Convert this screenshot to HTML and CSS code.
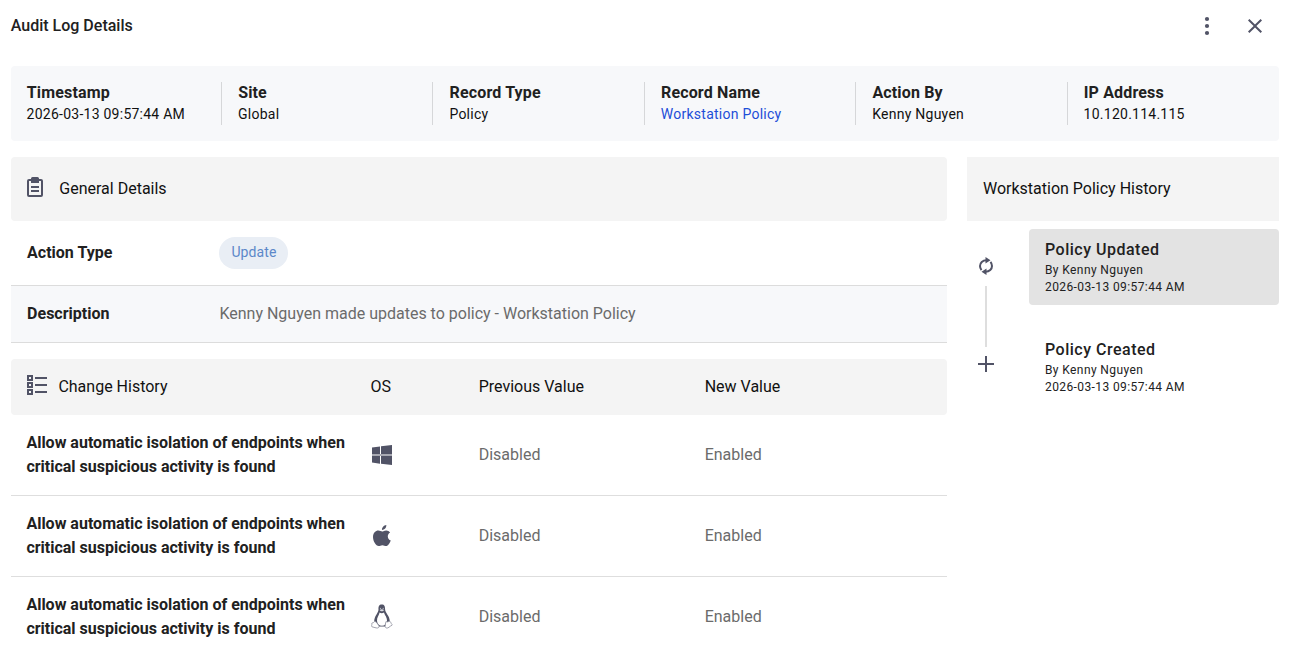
FILE: index.html
```html
<!DOCTYPE html>
<html lang="en">
<head>
  <meta charset="UTF-8">
  <meta name="viewport" content="width=device-width, initial-scale=1.0">
  <title>Audit Log Details</title>
  <link rel="stylesheet" href="styles.css">
</head>
<body>
  <header class="page-header">
    <h1>Audit Log Details</h1>
    <div class="header-actions">
      <button class="icon-button" aria-label="More">
        <svg width="24" height="24" viewBox="0 0 24 24"><circle cx="12" cy="5" r="2.1"/><circle cx="12" cy="12" r="2.1"/><circle cx="12" cy="19" r="2.1"/></svg>
      </button>
      <button class="icon-button" aria-label="Close">
        <svg width="24" height="24" viewBox="0 0 24 24"><path d="M19 6.400L17.600 5 12 10.600 6.400 5 5 6.400l5.600 5.600L5 17.600 6.400 19l5.600-5.600 5.600 5.600 1.400-1.400-5.600-5.600z"/></svg>
      </button>
    </div>
  </header>

  <section class="summary">
    <div class="summary-item"><strong>Timestamp</strong><span>2026-03-13 09:57:44 AM</span></div>
    <div class="summary-item"><strong>Site</strong><span>Global</span></div>
    <div class="summary-item"><strong>Record Type</strong><span>Policy</span></div>
    <div class="summary-item"><strong>Record Name</strong><a href="#">Workstation Policy</a></div>
    <div class="summary-item"><strong>Action By</strong><span>Kenny Nguyen</span></div>
    <div class="summary-item"><strong>IP Address</strong><span>10.120.114.115</span></div>
  </section>

  <div class="content">
    <main>
      <div class="panel-header general-header">
        <svg width="16" height="20" viewBox="0 0 16 20"><path fill-rule="evenodd" d="M2 2h2V1.500Q4 0 5.500 0h5Q12 0 12 1.500V2h2q2 0 2 2v14q0 2-2 2H2q-2 0-2-2V4q0-2 2-2zM2 4v14h12V4h-2v2H4V4zM4 9h8v2H4zM4 13h8v2H4z"/></svg>
        <h2>General Details</h2>
      </div>
      <div class="detail-row">
        <strong>Action Type</strong>
        <span class="badge">Update</span>
      </div>
      <div class="detail-row shaded">
        <strong>Description</strong>
        <span class="muted">Kenny Nguyen made updates to policy - Workstation Policy</span>
      </div>

      <div class="panel-header change-grid change-header">
        <div class="change-title">
          <svg width="20" height="20" viewBox="0 0 20 20"><path fill-rule="evenodd" d="M0 0h6v6H0zM2 2v2h2V2zM0 7h6v6H0zM2 9v2h2V9zM0 14h6v6H0zM2 16v2h2v-2zM8 2h12v2H8zM8 9h12v2H8zM8 16h12v2H8z"/></svg>
          <h2>Change History</h2>
        </div>
        <span>OS</span>
        <span>Previous Value</span>
        <span>New Value</span>
      </div>
      <div class="change-grid change-row">
        <strong>Allow automatic isolation of endpoints when critical suspicious activity is found</strong>
        <!-- Windows -->
        <svg width="22" height="22" viewBox="0 0 22 22"><path d="M1 3.500L9 2.400V10H1zM10 2.200L21 1v9H10zM1 12h8v7.700L1 18.600zM10 12h11v9l-11-1.200z"/><path opacity=".5" d="M1 10h20v2H1z"/></svg>
        <span class="muted">Disabled</span>
        <span class="muted">Enabled</span>
      </div>
      <div class="change-grid change-row">
        <strong>Allow automatic isolation of endpoints when critical suspicious activity is found</strong>
        <!-- macOS -->
        <svg width="22" height="22" viewBox="0 0 22 22"><path d="M15.300 0c.3 2.600-1.800 4.900-4.300 5C10.700 2.600 12.900.4 15.300 0zM11.200 6.500c1 0 2.200-1.100 4-1.100 1.600 0 3 .8 3.900 2-3.400 2-2.900 6.700.7 8.100-.8 2.200-2.700 5.600-4.700 5.600-1.400 0-2-.8-3.700-.8s-2.400.8-3.700.8C4.900 21.100 2 16.200 2 12.100 2 7.800 4.700 5.500 7.300 5.500c1.700 0 2.900 1 3.900 1z"/></svg>
        <span class="muted">Disabled</span>
        <span class="muted">Enabled</span>
      </div>
      <div class="change-grid change-row">
        <strong>Allow automatic isolation of endpoints when critical suspicious activity is found</strong>
        <!-- Linux -->
        <svg width="22" height="26" viewBox="0 0 22 26">
          <path d="M10.800.5C8 .5 7.300 2.500 7.500 5.500c.1 3.400-4.300 6.300-4.300 12l4 5h8l3.600-5c0-6-4.600-8.300-4.700-12C14.100 2.500 13.500.5 10.800.5z"/>
          <path fill="#fff" d="M8.600 8.500c1.200 1 3.200 1 4.400 0 .7 2.700 3.200 4.800 3 8.500-.2 3.200-2.300 4.800-5.100 4.800S6.400 20 6 17c-.3-3.500 2.100-5.800 2.600-8.500z"/>
          <path fill="#d9dae0" d="M8.600 6c1-1.100 3.500-1.100 4.400 0-.7 1.600-3.500 1.700-4.400 0z"/>
          <circle cx="9.500" cy="4.400" r=".6" fill="#b5b6c0"/><circle cx="12.200" cy="4.400" r=".6" fill="#b5b6c0"/>
          <path fill="#fff" stroke="#8b8d9a" stroke-width=".8" d="M3.800 17.300c1.500.5 2.800 2.500 4 4.300.9 1.700-.6 2.800-2.600 2.300-1.400-.4-3-.7-4.200-1.100-1.100-.5.200-1.900-.2-3.200-.1-1.200 1.300-.5 1.800-1.100.4-.5.600-1 1.200-1.200zM17.900 17.300c-.9 1-2.400.5-2.900.2-.5 1.600-.9 3.500-.9 5 .4 1.900 2.600 2 3.900.7.900-.9 2-1.300 2.900-1.900.8-.8-.7-1.400-1-2.500-.2-.9-.8-1.700-2-1.500z"/>
        </svg>
        <span class="muted">Disabled</span>
        <span class="muted">Enabled</span>
      </div>
    </main>

    <aside>
      <div class="history-header"><h2>Workstation Policy History</h2></div>
      <div class="timeline">
        <div class="timeline-track">
          <svg width="16" height="20" viewBox="0 0 16 20"><path fill="none" stroke="#515366" stroke-width="2" d="M8.500 4.200C4.500 4.200 2 7 2 10c0 1.600.6 3 1.500 4.100M7.500 15.800C11.500 15.800 14 13 14 10c0-1.600-.6-3-1.500-4.100"/><path d="M7.500 1L12.500 4.200 7.500 7.500zM8.500 12.500L3.500 15.800 8.500 19z"/></svg>
          <span class="timeline-line"></span>
          <svg width="16" height="16" viewBox="0 0 16 16"><path d="M7 0h2v7h7v2H9v7H7V9H0V7h7z"/></svg>
        </div>
        <div class="timeline-events">
          <div class="event active">
            <h3>Policy Updated</h3>
            <p>By Kenny Nguyen</p>
            <p>2026-03-13 09:57:44 AM</p>
          </div>
          <div class="event">
            <h3>Policy Created</h3>
            <p>By Kenny Nguyen</p>
            <p>2026-03-13 09:57:44 AM</p>
          </div>
        </div>
      </div>
    </aside>
  </div>
</body>
</html>
```

FILE: styles.css
```css
* {
  box-sizing: border-box;
}
body {
  margin: 0;
  padding: 0 15px 0 10.6px;
  font-family: Roboto, "Liberation Sans", sans-serif;
  font-size: 16px;
  line-height: 24px;
  color: #111;
  background: #fff;
  overflow: hidden;
}
h1, h2, h3, p {
  margin: 0;
}
h1, h2 {
  font-size: 16px;
  font-weight: 400;
}
svg {
  display: block;
  fill: #515366;
}
strong {
  font-weight: 700;
  color: #212121;
}
.page-header {
  display: flex;
  justify-content: space-between;
  align-items: center;
  height: 66px;
  padding: 0 12px 14px 0.2px;
}
.page-header h1 {
  font-weight: 500;
  color: #212121;
}
.header-actions {
  display: flex;
  gap: 24px;
}
.icon-button {
  padding: 0;
  border: none;
  background: none;
  cursor: pointer;
}

/* Summary bar */
.summary {
  display: grid;
  grid-template-columns: repeat(6, 1fr);
  height: 75px;
  padding: 16px 0;
  background: #f7f8fa;
  border-radius: 4px;
}
.summary-item {
  display: flex;
  flex-direction: column;
  padding-left: 16px;
  border-right: 1px solid #d6d7d9;
  font-size: 14px;
  line-height: 21px;
  letter-spacing: 0.25px;
}
.summary-item:last-child {
  border-right: none;
}
.summary-item strong {
  padding-left: 0.2px;
  font-size: 16px;
  line-height: 22px;
  letter-spacing: 0.15px;
}
.summary-item a {
  color: #1d4ed8;
  text-decoration: none;
}

.content {
  display: grid;
  grid-template-columns: 936px 312px;
  gap: 20.4px;
  margin-top: 16px;
}
.panel-header {
  background: #f4f4f4;
  border-radius: 4px;
}
.general-header {
  display: flex;
  align-items: center;
  gap: 16.7px;
  height: 64px;
  padding: 0 16px;
}
.panel-header svg {
  margin-bottom: 4px;
}
.detail-row {
  display: grid;
  grid-template-columns: 192.33px 1fr;
  align-items: center;
  height: 65px;
  padding: 0 16.5px;
  border-bottom: 1px solid #dcdcdc;
}
.detail-row.shaded {
  height: 57px;
  background: #f7f8fa;
}
.badge {
  justify-self: start;
  height: 32px;
  padding: 0 12px;
  border-radius: 16px;
  background: #e9eef5;
  color: #5c88c9;
  font-size: 14px;
  line-height: 31px;
  letter-spacing: 0.1px;
}
.muted {
  color: #6b6b6b;
}

/* Change history */
.change-grid {
  display: grid;
  grid-template-columns: 344px 108.3px 226px 1fr;
  align-items: center;
  padding: 0 15.8px;
}
.change-grid svg {
  margin-left: 0.4px;
}
.change-header {
  height: 56px;
  margin-top: 16px;
}
.change-title {
  display: flex;
  align-items: center;
  gap: 11.6px;
}
.change-row {
  height: 81px;
  border-bottom: 1px solid #dedede;
}
.change-row strong {
  padding-right: 20px;
}

/* Policy history */
.history-header {
  height: 64px;
  padding: 20px 16px;
  background: #f4f4f4;
}
.timeline {
  display: flex;
  gap: 24.5px;
  padding-top: 8px;
}
.timeline-track {
  display: flex;
  flex-direction: column;
  align-items: center;
  width: 37.5px;
  padding-top: 27px;
}
.timeline-line {
  width: 2px;
  height: 61px;
  margin: 10px 0 9px;
  background: #dedede;
}
.timeline-events {
  flex: 1;
}
.event {
  height: 76px;
  margin-bottom: 24px;
  padding: 9px 16px;
  border-radius: 4px;
  color: #212121;
}
.event.active {
  background: #e3e3e3;
}
.event h3 {
  font-size: 16px;
  font-weight: 500;
  letter-spacing: 0.5px;
}
.event p {
  font-size: 12px;
  line-height: 17px;
  letter-spacing: 0.4px;
}
```
